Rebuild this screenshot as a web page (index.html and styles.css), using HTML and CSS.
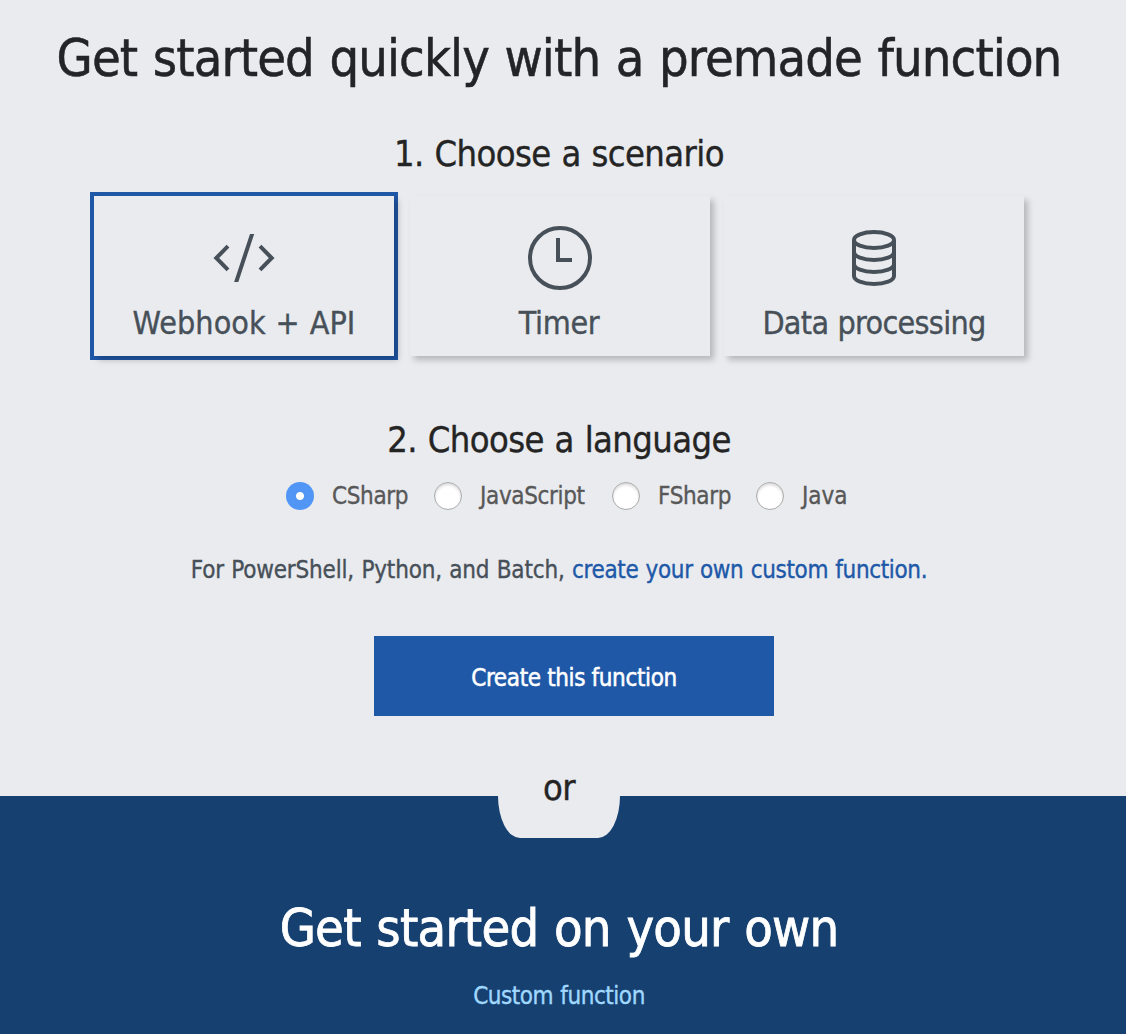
FILE: index.html
```html
<!DOCTYPE html>
<html lang="en">
<head>
<meta charset="utf-8">
<title>Create a function</title>
<link rel="stylesheet" href="styles.css">
</head>
<body>
<main class="premade">
  <h1 class="title">Get started quickly with a premade function</h1>
  <h2 class="step step-scenario">1. Choose a scenario</h2>
  <div class="cards">
    <div class="card card-selected">
      <svg class="icon" viewBox="0 0 64 64"><path d="M16 20.200 L4.300 32 L16 43.800 M48 20.200 L59.700 32 L48 43.800" /><path class="slash" d="M38 8 H42.200 L26.300 56 H22.100 Z" /></svg>
      <span class="label-webhook">Webhook + API</span>
    </div>
    <div class="card">
      <svg class="icon" viewBox="0 0 64 64"><circle cx="32" cy="32" r="30" /><path d="M30 12 V34 H44" /></svg>
      <span class="label-timer">Timer</span>
    </div>
    <div class="card card-data">
      <svg class="icon" viewBox="0 0 64 64"><ellipse cx="32" cy="14" rx="20" ry="8" /><path d="M12 14 V50 C12 54.500 21 58 32 58 S52 54.500 52 50 V14 M12 26 C12 30.500 21 34 32 34 S52 30.500 52 26 M12 38 C12 42.500 21 46 32 46 S52 42.500 52 38" /></svg>
      <span class="label-data">Data processing</span>
    </div>
  </div>
  <h2 class="step step-language">2. Choose a language</h2>
  <div class="languages">
    <label class="lang"><input class="radio" type="radio" name="lang" checked>CSharp</label>
    <label class="lang"><input class="radio" type="radio" name="lang">JavaScript</label>
    <label class="lang"><input class="radio" type="radio" name="lang">FSharp</label>
    <label class="lang lang-java"><input class="radio" type="radio" name="lang">Java</label>
  </div>
  <p class="note">For PowerShell, Python, and Batch, <a class="link">create your own custom function.</a></p>
  <button class="create">Create this function</button>
</main>
<section class="own">
  <div class="or"><span class="or-text">or</span></div>
  <h1 class="own-title">Get started on your own</h1>
  <a class="custom">Custom function</a>
</section>
</body>
</html>
```
FILE: styles.css
```css
* { box-sizing: border-box; }
body { margin: 0; background: #e9ebef; font-family: "DejaVu Sans Condensed", "DejaVu Sans", sans-serif; font-stretch: condensed; font-size: 24px; color: #222428; white-space: nowrap; word-spacing: .03em; -webkit-text-stroke: .35px currentColor; }
h1, h2, p { margin: 0; font-weight: 400; word-spacing: .03em; }
.premade { height: 796px; width: 1118px; padding-top: 28px; display: flex; flex-direction: column; align-items: center; }
.title { font-size: 52px; line-height: 60px; height: 60px; letter-spacing: -.9px; -webkit-text-stroke-width: .5px; }
.step { font-size: 36px; line-height: 40px; height: 40px; color: #242424; letter-spacing: -.58px; }
.step-scenario { margin-top: 46px; }
.cards { display: flex; gap: 16px; margin-top: 22px; }
.card { width: 300px; height: 160px; padding-top: 30px; display: flex; flex-direction: column; align-items: center; font-size: 32px; line-height: 40px; gap: 13px; color: #475058; box-shadow: 4px 4px 6px rgba(0, 0, 0, .22); }
.card-selected { box-shadow: 4px 4px 6px rgba(0, 0, 0, .22), 0 0 0 4px #2058a8; }
.card-data { margin-left: -2px; }
.label-webhook { letter-spacing: .05px; }
.label-timer { letter-spacing: -.3px; margin-right: 2px; }
.label-data { letter-spacing: -.7px; }
.icon { width: 64px; height: 64px; fill: none; stroke: #475058; stroke-width: 4; }
.slash { fill: #475058; stroke: none; }
.step-language { margin-top: 64px; }
.languages { display: flex; gap: 26px; margin: 20px 0 0 286px; height: 32px; align-self: flex-start; }
.lang { display: flex; align-items: center; gap: 18px; color: #585858; }
.lang { letter-spacing: -.35px; }
.lang:nth-child(1) { width: 122px; }
.lang:nth-child(2) { width: 152px; }
.lang:nth-child(3) { width: 118px; }
.lang-java { letter-spacing: 0; }
.radio { appearance: none; flex: none; width: 28px; height: 28px; margin: 0; border-radius: 50%; background: #fff; border: 1px solid #aaa; box-shadow: inset 0 2px 3px rgba(0, 0, 0, .15); }
.radio:checked { border: 0; background: radial-gradient(circle, #fff 3.500px, #5196f5 4.500px); box-shadow: none; }
.note { margin-top: 42px; line-height: 32px; color: #475058; letter-spacing: -.18px; }
.link { color: #2058a8; letter-spacing: -.35px; }
.create { margin: 50px 0 0 30px; width: 400px; height: 80px; border: 0; padding: 3px 0 0; background: #2058a8; color: #fff; font: inherit; letter-spacing: -.37px; -webkit-text-stroke: .5px #fff; }
.own { background: #164070; height: 238px; padding-right: 8px; display: flex; flex-direction: column; align-items: center; color: #fff; }
.or { width: 122px; height: 42px; background: #e9ebef; border-radius: 0 0 22px 22px / 0 0 42px 42px; text-align: center; font-size: 36px; line-height: 40px; color: #242424; letter-spacing: -.5px; }
.or-text { display: block; margin-top: -28px; }
.own-title { margin-top: 60px; font-size: 52px; line-height: 60px; letter-spacing: -.77px; -webkit-text-stroke-width: .8px; }
.custom { margin-top: 22px; line-height: 32px; color: #a0d8ff; letter-spacing: -.45px; }
```
